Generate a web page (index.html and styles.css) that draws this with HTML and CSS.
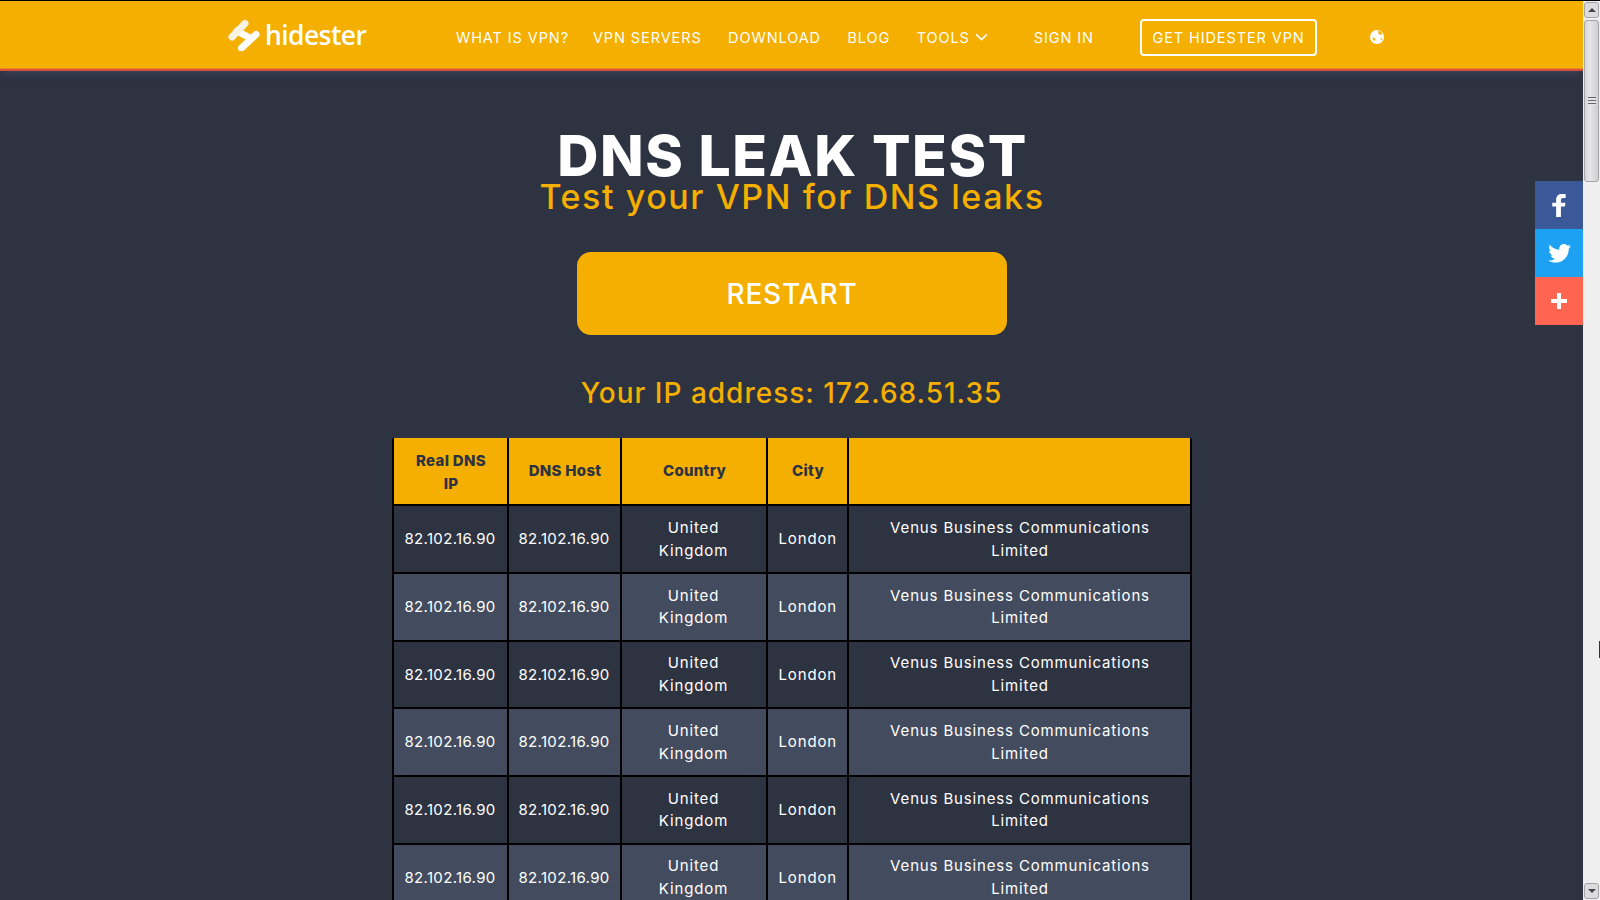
FILE: index.html
```html
<!DOCTYPE html>
<html lang="en">
<head>
<meta charset="utf-8">
<title>DNS Leak Test - Hidester</title>
<link rel="stylesheet" href="styles.css">
</head>
<body>
<div class="window">
  <div class="page">
    <header class="topbar">
      <div class="topbar-inner">
        <a class="logo" href="#">
          <svg class="logo-mark" viewBox="0 0 34 34" width="34" height="34" aria-hidden="true">
            <g fill="none" stroke-linecap="round" stroke-width="7">
              <path d="M11 14 L24 21" stroke="#fff"/>
              <path d="M6 20 L19 6.500" stroke="#f8f2e2"/>
              <path d="M15.500 31 L30 17.500" stroke="#fff"/>
            </g>
          </svg>
          <span class="logo-text">hidester</span>
        </a>
        <nav class="nav">
          <a href="#">WHAT IS VPN?</a>
          <a href="#">VPN SERVERS</a>
          <a href="#">DOWNLOAD</a>
          <a href="#">BLOG</a>
          <a href="#" class="tools">TOOLS
            <svg viewBox="0 0 14 9" width="13" height="8" aria-hidden="true"><path d="M1 1.500 L7 7.500 L13 1.500" fill="none" stroke="#fff" stroke-width="1.800"/></svg>
          </a>
          <a href="#" class="signin">SIGN IN</a>
          <a href="#" class="cta">GET HIDESTER VPN</a>
          <svg class="globe" viewBox="0 0 14 14" width="14" height="14" aria-hidden="true">
            <circle cx="7" cy="7" r="7" fill="#fff"/>
            <path d="M8 .8 L10.500 1.500 L12.500 4 L10 5 L8.500 3.500 Z M2 8 L4 7.500 L5.500 9.500 L4.500 11 Z M10.500 8.500 L12.500 8 L11 11 Z" fill="#f4af00"/>
          </svg>
        </nav>
      </div>
    </header>

    <main class="content">
      <h1 class="title">DNS LEAK TEST</h1>
      <h2 class="subtitle">Test your VPN for DNS leaks</h2>
      <a class="restart" href="#">RESTART</a>
      <p class="ip">Your IP address: 172.68.51.35</p>
      <table class="results">
        <thead>
          <tr><th class="c1">Real DNS<br>IP</th><th class="c2">DNS Host</th><th class="c3">Country</th><th class="c4">City</th><th class="c5"></th></tr>
        </thead>
        <tbody>
          <tr><td class="num">82.102.16.90</td><td class="num">82.102.16.90</td><td>United Kingdom</td><td>London</td><td class="isp">Venus Business Communications Limited</td></tr>
          <tr><td class="num">82.102.16.90</td><td class="num">82.102.16.90</td><td>United Kingdom</td><td>London</td><td class="isp">Venus Business Communications Limited</td></tr>
          <tr><td class="num">82.102.16.90</td><td class="num">82.102.16.90</td><td>United Kingdom</td><td>London</td><td class="isp">Venus Business Communications Limited</td></tr>
          <tr><td class="num">82.102.16.90</td><td class="num">82.102.16.90</td><td>United Kingdom</td><td>London</td><td class="isp">Venus Business Communications Limited</td></tr>
          <tr><td class="num">82.102.16.90</td><td class="num">82.102.16.90</td><td>United Kingdom</td><td>London</td><td class="isp">Venus Business Communications Limited</td></tr>
          <tr><td class="num">82.102.16.90</td><td class="num">82.102.16.90</td><td>United Kingdom</td><td>London</td><td class="isp">Venus Business Communications Limited</td></tr>
        </tbody>
      </table>
    </main>

    <aside class="social">
      <a class="fb" href="#"><svg viewBox="0 0 14 24" width="14" height="23" aria-hidden="true"><path d="M4 24V13H0V9h4V6c0-4 2.400-6 6-6 1.600 0 3 .1 4 .2v4h-2.500C9.400 4.200 9 5.200 9 6.600V9h4.700l-.6 4H9v11z" fill="#fff"/></svg></a>
      <a class="tw" href="#"><svg viewBox="0 0 24 20" width="23" height="19" aria-hidden="true"><path d="M24 2.400c-.9.400-1.800.7-2.800.8 1-.6 1.800-1.600 2.200-2.700-1 .6-2 1-3.100 1.200C19.300.7 18 0 16.600 0c-3.200 0-5.500 3-4.800 6C7.700 5.800 4.100 3.900 1.700.9.400 3.100 1 6 3.200 7.500c-.8 0-1.600-.2-2.200-.6 0 2.300 1.600 4.500 4 5-.7.200-1.500.2-2.200.1.600 2 2.500 3.400 4.600 3.400-2 1.600-4.600 2.300-7.200 2 2.200 1.400 4.800 2.200 7.500 2.200 9.100 0 14.300-7.700 14-14.600 1-.7 1.800-1.600 2.300-2.600z" fill="#fff"/></svg></a>
      <a class="plus" href="#"><svg viewBox="0 0 16 16" width="16" height="16" aria-hidden="true"><path d="M6 0h4v6h6v4h-6v6H6v-6H0V6h6z" fill="#fff"/></svg></a>
    </aside>
  </div>

  <div class="scrollbar" aria-hidden="true">
    <div class="sb-btn"><span class="sb-up"></span></div>
    <div class="sb-thumb"><span class="sb-grip"></span></div>
    <div class="sb-track"></div>
    <div class="sb-btn"><span class="sb-down"></span></div>
    <span class="cursor-mark"></span>
  </div>
</div>
</body>
</html>
```

FILE: styles.css
```css
* { box-sizing: border-box; }
html, body { margin: 0; height: 100%; overflow: hidden; }
body { font-family: "Inter", "Liberation Sans", sans-serif; background: #2e3342; color: #fff; }
a { color: inherit; text-decoration: none; }

.window { display: flex; height: 900px; border-top: 1px solid #000; }
.page { flex: 1 1 auto; min-width: 0; position: relative; overflow: hidden; background: #2e3342; }

.topbar { height: 70px; background: #f4af00; border-bottom: 2px solid #d8503a; box-shadow: inset 0 -1px 0 #f08c1e, 0 6px 6px -3px rgba(70,78,98,.55); }
.topbar-inner { display: flex; align-items: center; height: 68px; padding: 4px 0 0 226px; }

.logo { display: flex; align-items: center; gap: 5px; width: 230px; margin-top: -6px; }
.logo-mark { display: block; flex: none; }
.logo-text { font-family: "Open Sans", sans-serif; font-size: 26.500px; font-weight: 600; letter-spacing: -.6px; line-height: 1; position: relative; top: 1px; }

.nav { display: flex; align-items: center; font-size: 14.500px; letter-spacing: .9px; }
.nav a { margin-right: 26.500px; white-space: nowrap; }
.nav a:first-child { margin-right: 24px; }
.nav .tools { display: flex; align-items: center; gap: 5px; margin-right: 46px; }
.nav .signin { margin-right: 46px; }
.nav .cta { margin-right: 53px; padding: 0 10.500px; height: 37px; line-height: 33px; border: 2px solid #fff; border-radius: 4px; }
.globe { display: block; }

.content { display: flex; flex-direction: column; align-items: center; }
.title { margin: 60px 0 0; padding-left: 2px; font-size: 57px; line-height: 50px; font-weight: 800; letter-spacing: 1.600px; }
.subtitle { margin: 0; padding-left: 1px; font-size: 34px; line-height: 32px; font-weight: 500; color: #f4af00; letter-spacing: 1.570px; }
.restart { display: flex; align-items: center; justify-content: center; width: 430px; height: 83px; margin-top: 39px; padding: 1px 0 0 1px; background: #f4af00; border-radius: 14px; font-size: 28px; font-weight: 500; letter-spacing: .85px; }
.ip { margin: 40px 0 0; font-size: 28px; line-height: 36px; font-weight: 500; color: #f4af00; letter-spacing: 1px; }

.results { width: 800px; margin-top: 27px; border-collapse: collapse; table-layout: fixed; font-size: 15px; line-height: 22.600px; text-align: center; }
.results th, .results td { border: 2px solid #000; }
.results th { background: #f4af00; color: #2e3342; font-weight: 800; height: 67px; padding: 10px 10px 10px 12px; border-top-width: 0; letter-spacing: .3px; }
.results th.c1 { padding-top: 12px; padding-bottom: 9px; }
.results td { height: 67.700px; padding: 10.500px 11px 9.500px 11px; background: #2e3342; letter-spacing: .85px; }
.results tbody tr:nth-child(even) td { background: #434c5e; }
.results .num { letter-spacing: .34px; padding-left: 5px; padding-right: 5px; }
.results .isp { padding-left: 31px; padding-right: 29px; }
.c1 { width: 115px; }
.c2 { width: 113px; }
.c3 { width: 146px; }
.c4 { width: 81px; }

.social { position: absolute; top: 180px; right: 0; width: 48px; }
.social a { display: flex; align-items: center; justify-content: center; height: 48px; }
.fb { background: #3b5998; }
.tw { background: #1da1f2; }
.plus { background: #ff6550; }

.scrollbar { flex: 0 0 17px; position: relative; display: flex; flex-direction: column; background: #efefef; }
.sb-btn { height: 16px; flex: none; background: #dcdcdf; border: 1px solid #a5a5a9; border-radius: 3px; margin: 1px; display: flex; align-items: center; justify-content: center; }
.sb-up { border-left: 4px solid transparent; border-right: 4px solid transparent; border-bottom: 4px solid #45454d; }
.sb-down { border-left: 4px solid transparent; border-right: 4px solid transparent; border-top: 4px solid #45454d; }
.sb-thumb { height: 162px; flex: none; background: linear-gradient(90deg, #d4d4d7, #e6e6e8 35%, #cfcfd3); border: 1px solid #a5a5a9; border-radius: 3px; margin: 1px; display: flex; align-items: center; justify-content: center; }
.sb-grip { width: 8px; height: 8px; background: repeating-linear-gradient(180deg, #66666d 0 1px, #e5e5e7 1px 3px); }
.sb-track { flex: 1 1 auto; }
.cursor-mark { position: absolute; right: 0; top: 640px; width: 1px; height: 17px; background: #2e3342; }
```
